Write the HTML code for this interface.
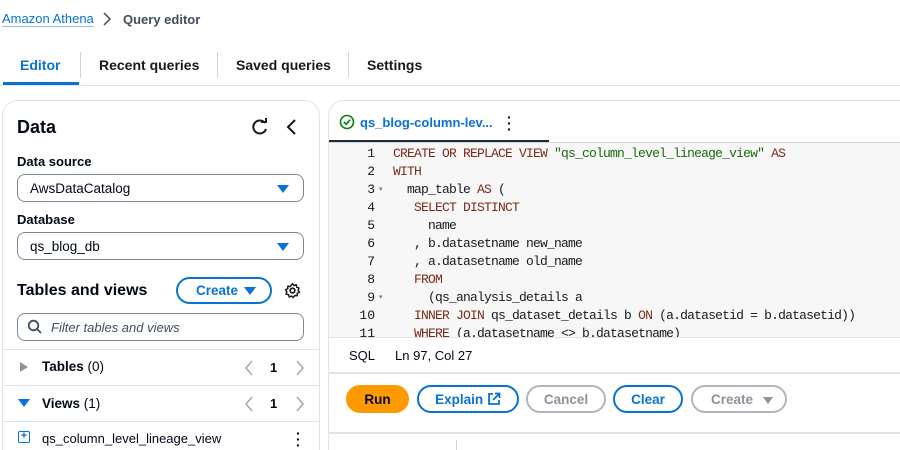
<!DOCTYPE html>
<html><head><style>
*{box-sizing:border-box;margin:0;padding:0}
html,body{width:900px;height:450px;overflow:hidden}
body{background:#fff;font-family:"Liberation Sans",sans-serif;color:#000716;position:relative}
.a{position:absolute}
.b{font-weight:bold}
.sel{position:absolute;left:17px;width:287px;height:28px;border:1px solid #7d8998;border-radius:8px;font-size:13.5px;padding:6px 0 0 12px}
.tri{position:absolute;right:14px;top:10px;width:0;height:0;border-left:6px solid transparent;border-right:6px solid transparent;border-top:8px solid #0972d3}
.btn{position:absolute;top:385px;height:28px;border:2px solid #0972d3;border-radius:15px;font-size:13.5px;font-weight:bold;color:#0972d3;text-align:center;padding-top:5px}
.dis{border-color:#b4b4bb;color:#8d9399}
.code{font-family:"Liberation Mono",monospace;font-size:13px;letter-spacing:-0.8px;line-height:18px;white-space:pre}
.k{color:#7c2b1b}.s{color:#1a6a0b}
</style></head><body>
<div class="a" style="left:2px;top:11px;font-size:13px;color:#0972d3;border-bottom:1px solid #9cb8e6;line-height:15px">Amazon Athena</div>
<svg class="a" style="left:101px;top:12px" width="12" height="14"><path d="M3 1 L9 7 L3 13" stroke="#414d5c" stroke-width="1.5" fill="none"/></svg>
<div class="a b" style="left:123px;top:12px;font-size:13px;color:#414d5c">Query editor</div>

<div class="a b" style="left:20px;top:57px;font-size:14px;color:#0972d3">Editor</div>
<div class="a" style="left:3px;top:82px;width:76px;height:3px;background:#0972d3"></div>
<div class="a" style="left:80px;top:52px;width:1px;height:26px;background:#d1d5db"></div>
<div class="a b" style="left:99px;top:57px;font-size:14px;color:#16191f">Recent queries</div>
<div class="a" style="left:217px;top:52px;width:1px;height:26px;background:#d1d5db"></div>
<div class="a b" style="left:236px;top:57px;font-size:14px;color:#16191f">Saved queries</div>
<div class="a" style="left:348px;top:52px;width:1px;height:26px;background:#d1d5db"></div>
<div class="a b" style="left:367px;top:57px;font-size:14px;color:#16191f">Settings</div>
<div class="a" style="left:0;top:85px;width:900px;height:1px;background:#e0e3e8"></div>

<!-- left panel -->
<div class="a" style="left:2px;top:100px;width:318px;height:370px;border:1px solid #e0e3e8;border-radius:16px"></div>
<div class="a b" style="left:17px;top:117px;font-size:18px">Data</div>
<svg class="a" style="left:250px;top:117px" width="20" height="20"><path d="M15 6 A6.5 6.5 0 1 0 16 12" stroke="#16191f" stroke-width="2" fill="none"/><path d="M11 5 L16 5 L16 1" stroke="#16191f" stroke-width="2" fill="none"/></svg>
<svg class="a" style="left:285px;top:118px" width="14" height="18"><path d="M10 2 L3 9 L10 16" stroke="#16191f" stroke-width="2" fill="none"/></svg>
<div class="a b" style="left:17px;top:154px;font-size:13px">Data source</div>
<div class="sel" style="top:174px">AwsDataCatalog<div class="tri"></div></div>
<div class="a b" style="left:17px;top:212px;font-size:13px">Database</div>
<div class="sel" style="top:232px">qs_blog_db<div class="tri"></div></div>
<div class="a b" style="left:17px;top:282px;font-size:16px">Tables and views</div>
<div class="a b" style="left:176px;top:277px;width:96px;height:27px;border:2px solid #0972d3;border-radius:14px;color:#0972d3;font-size:13.5px;padding:4px 0 0 18px">Create<div class="tri" style="right:14px;top:8px;border-top-color:#0972d3"></div></div>
<svg class="a" style="left:284px;top:282px" width="17" height="17" viewBox="0 0 16 16"><circle cx="8" cy="8" r="2.2" stroke="#16191f" stroke-width="1.6" fill="none"/><path d="M8 1.5 L9.3 3.3 L11.6 2.6 L11.9 4.9 L14.1 5.6 L13.3 7.8 L14.6 9.6 L12.5 10.6 L12.4 12.9 L10.1 12.7 L8.8 14.6 L7 13.2 L4.9 14.1 L4.2 11.9 L1.9 11.4 L2.7 9.2 L1.4 7.3 L3.5 6.3 L3.6 4 L5.9 4.2 Z" stroke="#16191f" stroke-width="1.4" fill="none" stroke-linejoin="round"/></svg>
<div class="a" style="left:17px;top:313px;width:287px;height:28px;border:1px solid #7d8998;border-radius:8px"></div>
<svg class="a" style="left:27px;top:319px" width="16" height="16"><circle cx="6.5" cy="6.5" r="4.8" stroke="#414d5c" stroke-width="1.8" fill="none"/><path d="M10 10 L14 14" stroke="#414d5c" stroke-width="1.8"/></svg>
<div class="a" style="left:51px;top:320px;font-size:13px;font-style:italic;color:#414d5c">Filter tables and views</div>
<div class="a" style="left:3px;top:349px;width:316px;height:1px;background:#e0e3e8"></div>
<div class="a" style="left:20px;top:362px;width:0;height:0;border-top:5px solid transparent;border-bottom:5px solid transparent;border-left:8px solid #8d9399"></div>
<div class="a" style="left:42px;top:359px;font-size:13.5px"><b>Tables</b> (0)</div>
<svg class="a" style="left:242px;top:359px" width="70" height="18"><path d="M10 2 L4 9 L10 16" stroke="#a0a6ae" stroke-width="1.5" fill="none"/><path d="M55 2 L61 9 L55 16" stroke="#a0a6ae" stroke-width="1.5" fill="none"/></svg>
<div class="a b" style="left:270px;top:360px;font-size:13px">1</div>
<div class="a" style="left:3px;top:385px;width:316px;height:1px;background:#e0e3e8"></div>
<div class="a" style="left:18px;top:399px;width:0;height:0;border-left:6px solid transparent;border-right:6px solid transparent;border-top:8px solid #0972d3"></div>
<div class="a" style="left:42px;top:396px;font-size:13.5px"><b>Views</b> (1)</div>
<svg class="a" style="left:242px;top:395px" width="70" height="18"><path d="M10 2 L4 9 L10 16" stroke="#a0a6ae" stroke-width="1.5" fill="none"/><path d="M55 2 L61 9 L55 16" stroke="#a0a6ae" stroke-width="1.5" fill="none"/></svg>
<div class="a b" style="left:270px;top:396px;font-size:13px">1</div>
<div class="a" style="left:3px;top:421px;width:316px;height:1px;background:#e0e3e8"></div>
<div class="a" style="left:18px;top:431px;width:12px;height:12px;border:1.5px solid #0972d3;border-radius:2px;color:#0972d3;font-size:11px;line-height:9px;text-align:center;font-weight:bold">+</div>
<div class="a" style="left:42px;top:431px;font-size:13px">qs_column_level_lineage_view</div>
<div class="a b" style="left:296px;top:430px;font-size:14px;line-height:6px">·<br>·<br>·</div>

<!-- right panel -->
<div class="a" style="left:328px;top:100px;width:600px;height:370px;border:1px solid #e0e3e8;border-radius:16px"></div>
<svg class="a" style="left:339px;top:114px" width="16" height="16"><circle cx="8" cy="8" r="6.5" stroke="#037f0c" stroke-width="1.6" fill="none"/><path d="M4.8 8 L7.2 10.3 L11 5.8" stroke="#037f0c" stroke-width="1.6" fill="none"/></svg>
<div class="a b" style="left:360px;top:115px;font-size:13px;color:#0972d3">qs_blog-column-lev...</div>
<div class="a b" style="left:507px;top:114px;font-size:14px;line-height:6px">·<br>·<br>·</div>
<div class="a" style="left:329px;top:140px;width:220px;height:3px;background:#1d2a3b"></div>
<div class="a" style="left:329px;top:142px;width:571px;height:1px;background:#d1d5db"></div>
<div class="a" style="left:329px;top:143px;width:571px;height:194px;background:#f7f7f7;overflow:hidden">
<div class="a code" style="left:6px;top:2px;width:40px;text-align:right;color:#16191f;letter-spacing:0">1
2
3
4
5
6
7
8
9
10
11</div>
<div class="a code" style="left:50px;top:2px;color:#777;font-size:7px;line-height:18px;letter-spacing:0">

▾





▾</div>
<div class="a code" style="left:64px;top:2px;color:#16191f"><span class="k">CREATE OR REPLACE VIEW</span> <span class="s">"qs_column_level_lineage_view"</span> <span class="k">AS</span>
<span class="k">WITH</span>
  map_table <span class="k">AS</span> (
   <span class="k">SELECT DISTINCT</span>
     name
   , b.datasetname new_name
   , a.datasetname old_name
   <span class="k">FROM</span>
     (qs_analysis_details a
   <span class="k">INNER JOIN</span> qs_dataset_details b <span class="k">ON</span> (a.datasetid = b.datasetid))
   <span class="k">WHERE</span> (a.datasetname &lt;&gt; b.datasetname)</div>
</div>
<div class="a" style="left:329px;top:337px;width:571px;height:1px;background:#e0e3e8"></div>
<div class="a" style="left:349px;top:348px;font-size:13px">SQL</div>
<div class="a" style="left:395px;top:348px;font-size:13px">Ln 97, Col 27</div>
<div class="a" style="left:329px;top:372px;width:571px;height:2px;background:#e0e3e8"></div>
<div class="btn" style="left:346px;width:63px;background:#ff9900;border-color:#ff9900;color:#000716">Run</div>
<div class="btn" style="left:417px;width:102px">Explain <svg width="14" height="14" style="vertical-align:-2px"><path d="M6 2 H2 V12 H12 V8" stroke="#0972d3" stroke-width="1.8" fill="none"/><path d="M8 1.5 H12.5 V6 M12.5 1.5 L6 8" stroke="#0972d3" stroke-width="1.8" fill="none"/></svg></div>
<div class="btn dis" style="left:526px;width:80px">Cancel</div>
<div class="btn" style="left:613px;width:70px">Clear</div>
<div class="btn dis" style="left:691px;width:96px;text-align:left;padding-left:18px">Create <span style="display:inline-block;width:0;height:0;border-left:5px solid transparent;border-right:5px solid transparent;border-top:7px solid #8d9399;margin-left:6px"></span></div>
<div class="a" style="left:329px;top:432px;width:571px;height:2px;background:#e0e3e8"></div>
<div class="a" style="left:456px;top:440px;width:1px;height:10px;background:#d1d5db"></div>
</body></html>
